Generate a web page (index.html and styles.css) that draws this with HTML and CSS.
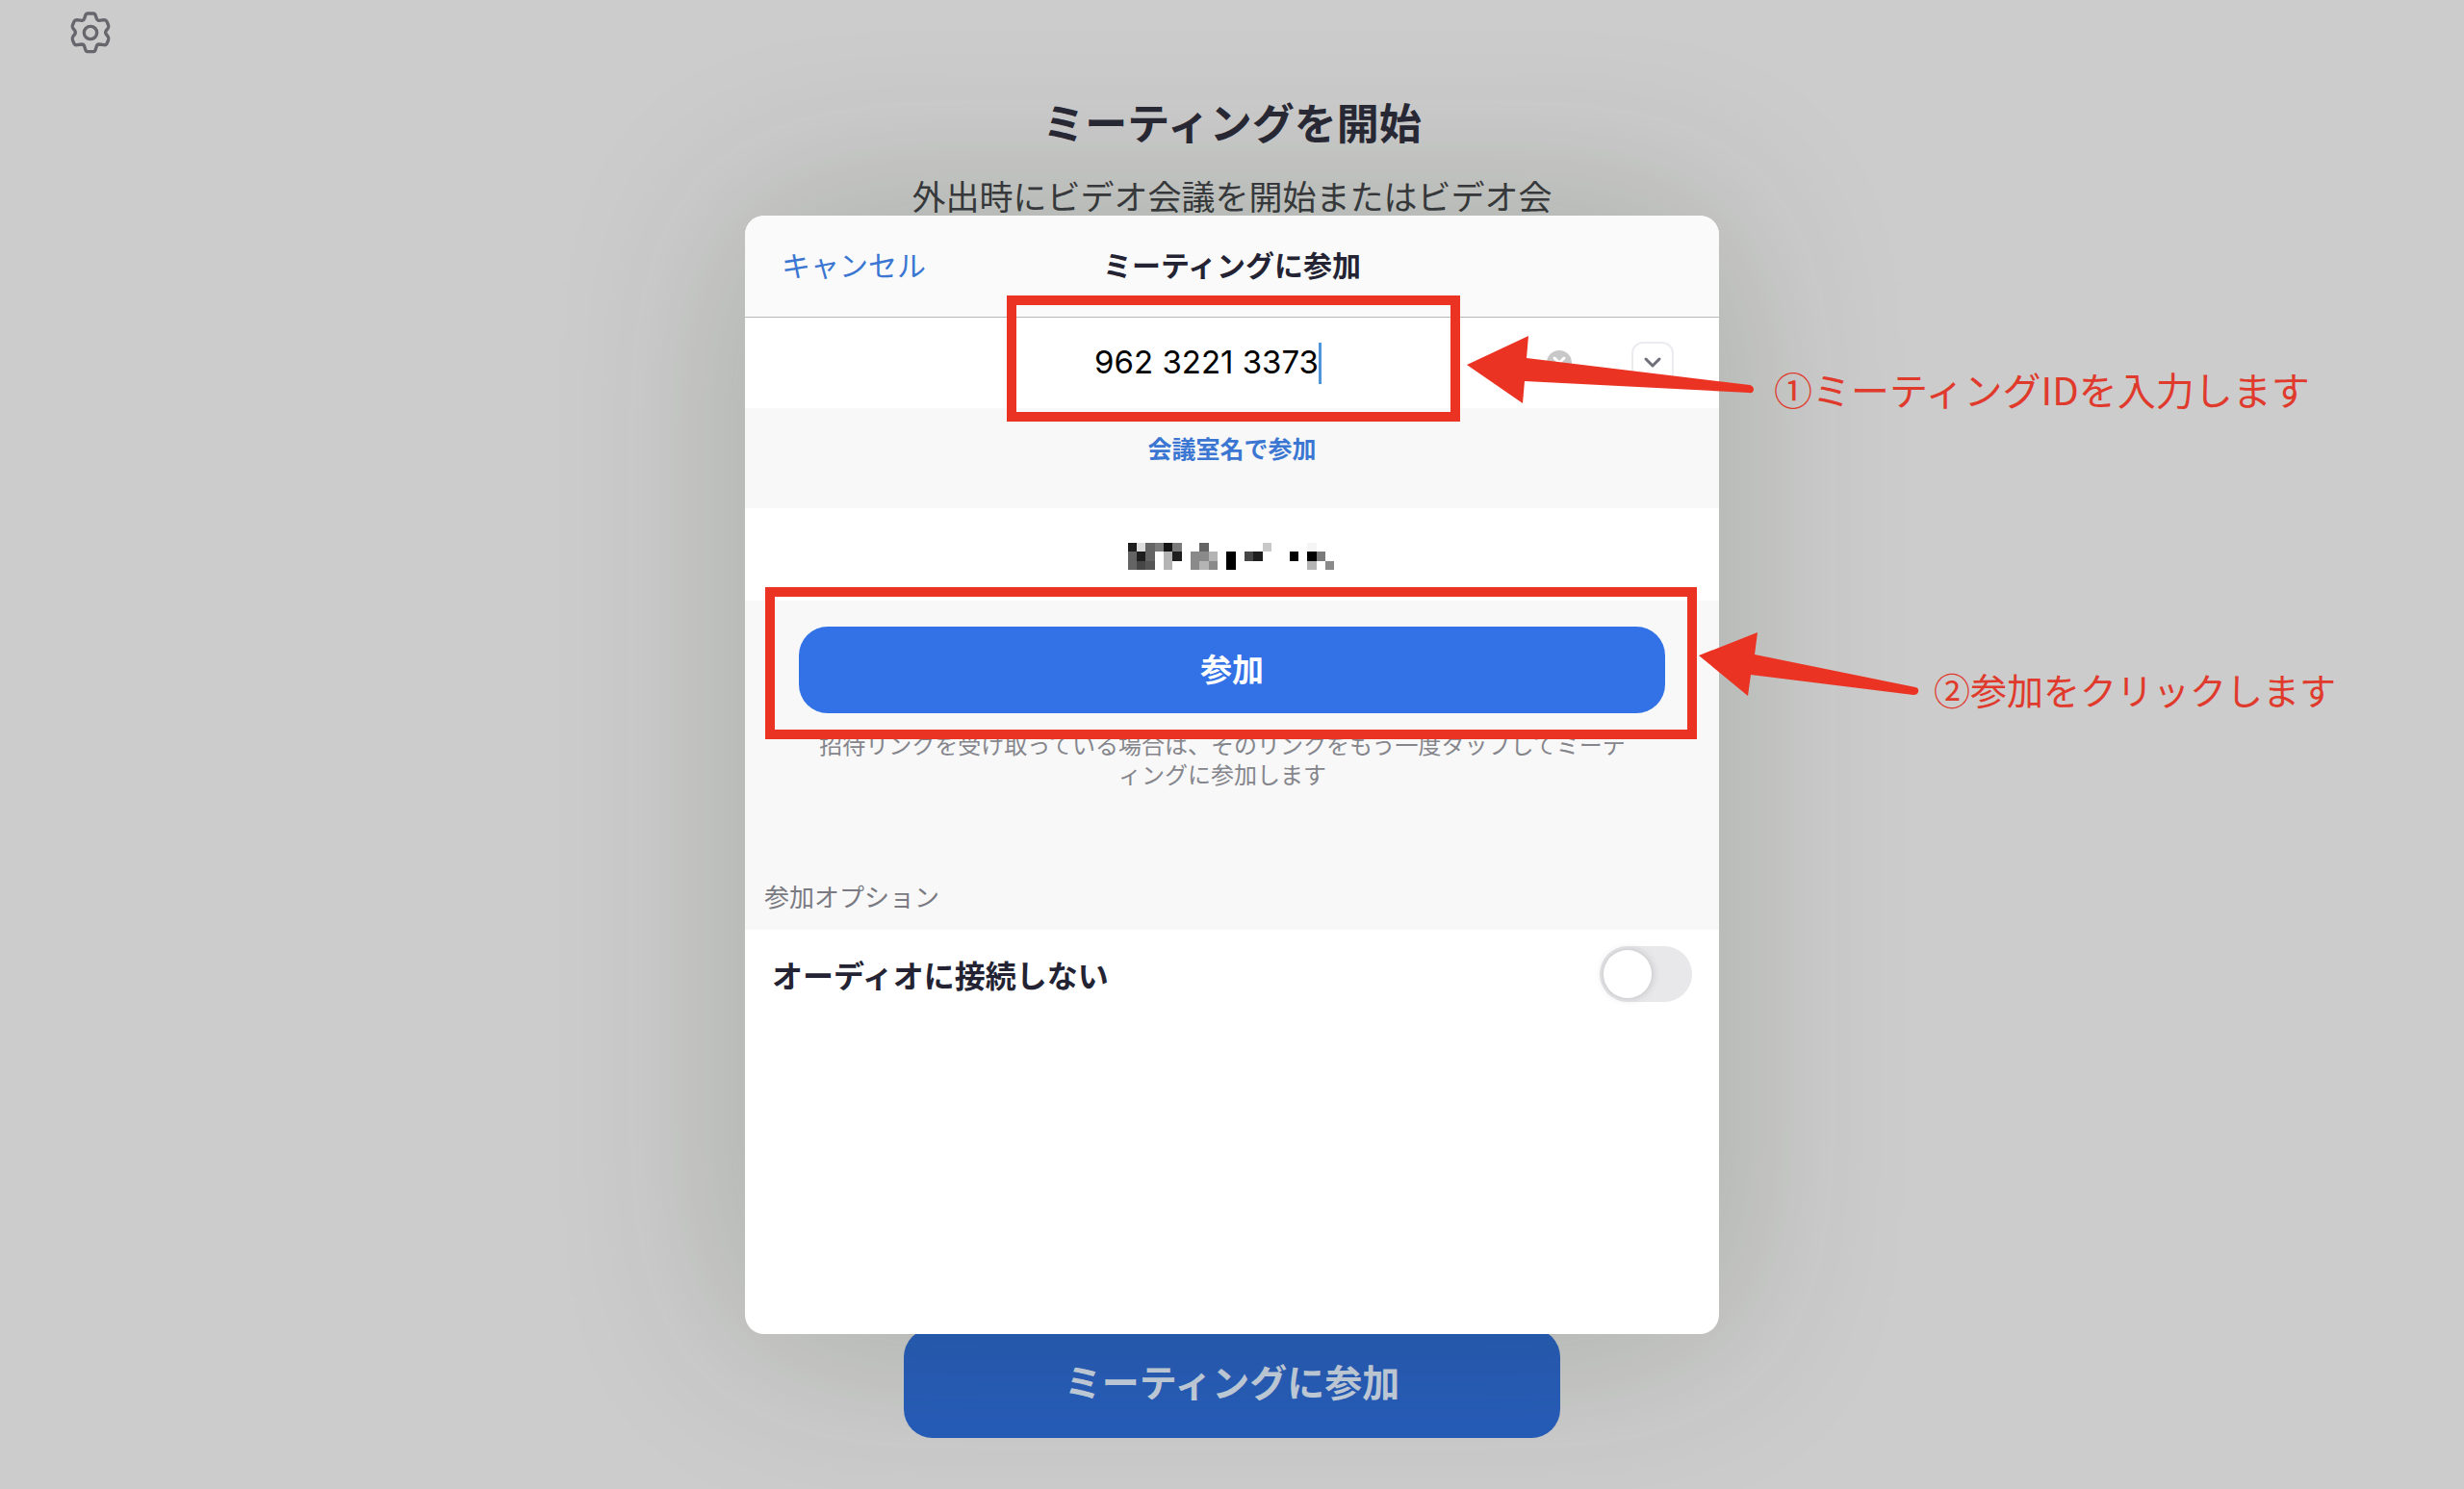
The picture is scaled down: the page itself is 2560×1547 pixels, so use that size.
FILE: index.html
```html
<!DOCTYPE html>
<html lang="ja">
<head>
<meta charset="utf-8">
<meta name="viewport" content="width=device-width, initial-scale=1">
<title>ミーティングに参加</title>
<link rel="stylesheet" href="styles.css">
</head>
<body>
<div class="home">
  <header class="home-bar">
    <button class="settings" type="button" aria-label="設定">
      <svg viewBox="95 32 132 138" fill="none" stroke="currentColor" stroke-width="10" stroke-linejoin="round">
        <path d="M152 41H170Q175 41 177 48L180 57Q182 63 188 63L203 61Q209 61 212 66L217 78Q219 83 215 88L210 94Q206 100 210 106L215 112Q219 118 217 123L212 135Q209 140 203 139L188 137Q182 137 180 143L177 153Q175 160 170 160H152Q147 160 145 153L142 143Q140 137 134 137L119 139Q113 140 110 135L105 123Q103 118 107 112L112 106Q116 100 112 94L107 88Q103 83 105 78L110 66Q113 61 119 61L134 63Q140 63 142 57L145 48Q147 41 152 41Z"/>
        <circle cx="161" cy="101" r="20"/>
      </svg>
    </button>
  </header>
  <h1 class="home-title">ミーティングを開始</h1>
  <p class="home-text">外出時にビデオ会議を開始またはビデオ会</p>
  <button class="home-join" type="button">ミーティングに参加</button>
</div>

<div class="overlay">
  <form class="dialog" role="dialog" aria-labelledby="dialog-title">
    <header class="dialog-bar">
      <button class="cancel" type="button">キャンセル</button>
      <h2 class="dialog-title" id="dialog-title">ミーティングに参加</h2>
    </header>

    <div class="row id-row">
      <input class="id-input" type="text" aria-label="ミーティングID" value="962 3221 3373">
      <span class="caret"></span>
      <button class="clear" type="button" aria-label="消去">
        <svg viewBox="0 0 26 26" fill="none" stroke="#fff" stroke-width="3" stroke-linecap="round"><path d="M8 8L18 18M18 8L8 18"/></svg>
      </button>
      <button class="history" type="button" aria-label="履歴">
        <svg viewBox="0 0 20 14" fill="none" stroke="currentColor" stroke-width="3" stroke-linecap="round" stroke-linejoin="round"><path d="M3 3L10 10L17 3"/></svg>
      </button>
      <span class="mark mark-id"></span>
      <svg class="arrow arrow-id" viewBox="0 0 300 70"><path d="M0 30L64 0L62 23L294 51Q298 52 298 56Q297 60 293 59L60 47L58 70Z"/></svg>
      <p class="note note-id">①ミーティングIDを入力します</p>
    </div>

    <div class="link-row">
      <a class="room-link" href="#room">会議室名で参加</a>
    </div>

    <div class="row name-row">
      <svg class="masked-name" viewBox="0 0 23 3" role="img" aria-label="表示名" shape-rendering="crispEdges">
        <path fill="#1e1e1e" d="M0 0h1v1h-1zM1 1h1v1h-1zM5 1h1v1h-1zM14 1h1v1h-1z"/>
        <path fill="#ddd" d="M1 0h1v1h-1z"/>
        <path fill="#646464" d="M2 0h1v2h-1zM0 1h1v2h-1zM8 0h1v1h-1z"/>
        <path fill="#7a7a7a" d="M3 0h1v1h-1zM5 0h1v1h-1zM21 1h1v1h-1z"/>
        <path fill="#141414" d="M4 0h1v1h-1z"/>
        <path fill="#c8c8c8" d="M15 0h1v1h-1z"/>
        <path fill="#f5f5f5" d="M20 0h1v1h-1z"/>
        <path fill="#b4b4b4" d="M4 1h1v2h-1zM9 1h1v1h-1zM8 2h1v1h-1zM20 2h1v1h-1z"/>
        <path fill="#8a8a8a" d="M7 1h2v1h-2zM7 2h1v1h-1zM9 2h1v1h-1zM22 2h1v1h-1z"/>
        <path fill="#000" d="M11 1h1v2h-1zM18 1h1v1h-1zM20 1h1v1h-1z"/>
        <path fill="#464646" d="M13 1h1v1h-1zM1 2h1v1h-1z"/>
        <path fill="#555" d="M2 2h1v1h-1z"/>
      </svg>
    </div>

    <div class="join-area">
      <button class="join" type="submit">参加</button>
      <p class="hint">招待リンクを受け取っている場合は、そのリンクをもう一度タップしてミーティングに参加します</p>
      <h3 class="options-title">参加オプション</h3>
      <span class="mark mark-join"></span>
      <svg class="arrow arrow-join" viewBox="0 0 230 66"><path d="M0 24L61 0L58 23L225 57Q229 58 228 62Q227 65 223 65L54 44L51 66Z"/></svg>
      <p class="note note-join">②参加をクリックします</p>
    </div>

    <label class="option">
      <span>オーディオに接続しない</span>
      <input class="switch" type="checkbox" role="switch">
    </label>
  </form>
</div>
</body>
</html>
```
FILE: styles.css
```css
* {
  box-sizing: border-box;
}

body {
  margin: 0;
  background: #ccc;
  color: #232333;
  font-family: "Noto Sans CJK JP", sans-serif;
}

h1, h2, h3, p {
  margin: 0;
}

button, input {
  font-family: inherit;
  border: 0;
  padding: 0;
}

/* Home screen behind the dialog */
.home {
  display: flex;
  flex-direction: column;
  align-items: center;
  min-height: 100vh;
  padding-bottom: 53px;
}

.home-bar {
  align-self: stretch;
  height: 94px;
  padding: 11px 72px;
}

.settings {
  width: 44px;
  height: 46px;
  background: none;
  color: #66666c;
}

.settings svg {
  display: block;
  width: 44px;
  height: 46px;
}

.home-title {
  font-size: 44px;
  line-height: 64px;
  color: #292936;
}

.home-text {
  margin-top: 20px;
  font-size: 35px;
  line-height: 50px;
  color: #3a3a40;
}

.home-join {
  width: 682px;
  max-width: 100%;
  height: 114px;
  margin-top: auto;
  padding-bottom: 6px;
  border-radius: 30px;
  background: #285dbb;
  color: #c6d0e0;
  font-size: 39px;
  font-weight: 700;
}

/* Join dialog */
.overlay {
  position: absolute;
  inset: 0;
  display: flex;
  justify-content: center;
  padding: 224px 0 161px;
}

.dialog {
  display: flex;
  flex-direction: column;
  width: 1012px;
  border-radius: 20px;
  background: #fff;
  box-shadow: 0 0 200px rgba(20, 45, 10, 0.2);
}

.dialog-bar {
  display: grid;
  grid-template-columns: 1fr auto 1fr;
  align-items: center;
  height: 106px;
  padding: 0 38px 6px;
  border-bottom: 1px solid #b8b8b8;
  border-radius: 20px 20px 0 0;
  background: #fafafa;
}

.cancel {
  justify-self: start;
  background: none;
  color: #3a76d2;
  font-size: 30px;
}

.dialog-title {
  font-size: 30px;
}

.row {
  display: flex;
  align-items: center;
  height: 94px;
}

.id-row {
  position: relative;
  padding-right: 47px;
}

.id-input {
  width: 596px;
  padding-bottom: 2px;
  background: none;
  color: #000;
  font-family: Inter, sans-serif;
  font-size: 33px;
  line-height: 40px;
  text-align: right;
  outline: 0;
}

.caret {
  width: 3px;
  height: 43px;
  background: #4f95dc;
}

.clear {
  width: 26px;
  height: 26px;
  margin-left: auto;
  border-radius: 50%;
  background: #c8c8c8;
}

.clear svg {
  display: block;
}

.history {
  display: grid;
  place-items: center;
  width: 44px;
  height: 44px;
  margin-left: 62px;
  border: 2px solid #ececf0;
  border-radius: 12px;
  background: #fff;
  color: #6e6e7a;
}

.history svg {
  width: 20px;
}

.link-row {
  display: flex;
  justify-content: center;
  height: 104px;
  padding-top: 23px;
  background: #f8f8f8;
}

.room-link {
  color: #3a76d2;
  font-size: 25px;
  font-weight: 700;
  line-height: 36px;
  text-decoration: none;
}

.name-row {
  justify-content: center;
  height: 96px;
  padding: 4px 2px 0 0;
}

.masked-name {
  width: 216px;
  height: 28px;
}

.join-area {
  position: relative;
  padding: 27px 20px 17px;
  background: #f8f8f8;
}

.join {
  display: block;
  width: calc(100% - 72px);
  height: 90px;
  margin: 0 auto;
  padding-bottom: 4px;
  border-radius: 30px;
  background: #3371e6;
  color: #fff;
  font-size: 33px;
  font-weight: 700;
}

.hint {
  width: 856px;
  margin: 16px 0 0 48px;
  color: #85858c;
  font-size: 24px;
  line-height: 31px;
  line-break: anywhere;
  text-align: center;
}

.options-title {
  margin-top: 94px;
  color: #7a7a82;
  font-size: 26px;
  font-weight: 400;
  line-height: 36px;
}

.option {
  display: flex;
  align-items: center;
  justify-content: space-between;
  height: 92px;
  padding: 0 28px;
  font-size: 32px;
  font-weight: 700;
}

.switch {
  appearance: none;
  display: flex;
  align-items: center;
  width: 96px;
  height: 58px;
  margin: 0;
  padding: 4px;
  border-radius: 29px;
  background: #e8e8eb;
}

.switch::before {
  content: "";
  width: 50px;
  height: 50px;
  border-radius: 50%;
  background: #fff;
  box-shadow: 0 0 10px rgba(0, 0, 0, 0.2);
}

.switch:checked {
  justify-content: flex-end;
  background: #3371e6;
}

/* Guide marks laid over the dialog */
.mark {
  position: absolute;
  border: 10px solid #eb3323;
  pointer-events: none;
}

.mark-id {
  top: -23px;
  left: 272px;
  width: 471px;
  height: 131px;
}

.mark-join {
  top: -14px;
  left: 21px;
  right: 23px;
  height: 158px;
}

.arrow {
  position: absolute;
  fill: #eb3323;
  pointer-events: none;
}

.arrow-id {
  top: 19px;
  left: 750px;
  width: 300px;
}

.arrow-join {
  top: 33px;
  left: 991px;
  width: 230px;
}

.note {
  position: absolute;
  color: #e03a2c;
  line-height: 56px;
  white-space: nowrap;
}

.note-id {
  top: 46px;
  left: 1069px;
  font-size: 40px;
}

.note-join {
  top: 64px;
  left: 1235px;
  font-size: 38px;
}
```
